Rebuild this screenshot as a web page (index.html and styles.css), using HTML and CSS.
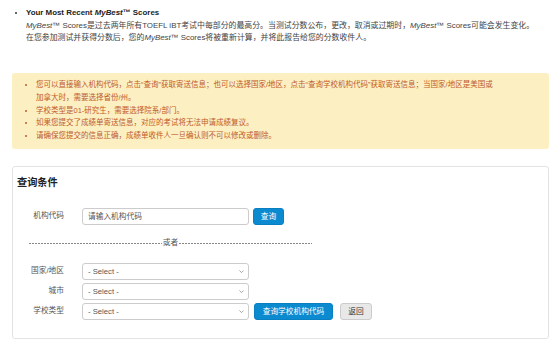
FILE: index.html
```html
<!DOCTYPE html>
<html lang="zh-CN">
<head>
    <meta charset="UTF-8">
    <meta name="viewport" content="width=device-width, initial-scale=1.0">
    <title>成绩单寄送</title>
    <link rel="stylesheet" href="styles.css">
</head>
<body>
<div class="page">
  <ul class="score-note">
    <li>
      <div class="note-title">Your Most Recent <i>MyBest</i>™ Scores</div>
      <div class="note-text"><i>MyBest</i>™ Scores是过去两年所有TOEFL iBT考试中每部分的最高分。当测试分数公布，更改，取消或过期时，<i>MyBest</i>™ Scores可能会发生变化。在您参加测试并获得分数后，您的<i>MyBest</i>™ Scores将被重新计算，并将此报告给您的分数收件人。</div>
    </li>
  </ul>

  <div class="alert">
    <ul>
      <li>您可以直接输入机构代码，点击“查询”获取寄送信息；也可以选择国家/地区，点击“查询学校机构代码”获取寄送信息；当国家/地区是美国或加拿大时，需要选择省份/州。</li>
      <li>学校类型是01-研究生，需要选择院系/部门。</li>
      <li>如果您提交了成绩单寄送信息，对应的考试将无法申请成绩复议。</li>
      <li>请确保您提交的信息正确，成绩单收件人一旦确认则不可以修改或删除。</li>
    </ul>
  </div>

  <div class="panel">
    <h3 class="panel-title">查询条件</h3>

    <div class="field">
      <label class="field-label">机构代码</label>
      <input type="text" class="text-input" placeholder="请输入机构代码">
      <button class="btn btn-primary btn-search">查询</button>
    </div>

    <div class="divider">
      <span class="dash"></span>
      <span class="divider-text">或者</span>
      <span class="dash"></span>
    </div>

    <div class="field">
      <label class="field-label">国家/地区</label>
      <span class="select-wrap">
        <select><option>- Select -</option></select>
        <svg class="chevron" viewBox="0 0 6 4"><path d="M0.5 0.5 L3 3 L5.5 0.5" fill="none" stroke="#777" stroke-width="0.8"/></svg>
      </span>
    </div>
    <div class="field">
      <label class="field-label">城市</label>
      <span class="select-wrap">
        <select><option>- Select -</option></select>
        <svg class="chevron" viewBox="0 0 6 4"><path d="M0.5 0.5 L3 3 L5.5 0.5" fill="none" stroke="#777" stroke-width="0.8"/></svg>
      </span>
    </div>
    <div class="field">
      <label class="field-label">学校类型</label>
      <span class="select-wrap">
        <select><option>- Select -</option></select>
        <svg class="chevron" viewBox="0 0 6 4"><path d="M0.5 0.5 L3 3 L5.5 0.5" fill="none" stroke="#777" stroke-width="0.8"/></svg>
      </span>
      <button class="btn btn-primary btn-school">查询学校机构代码</button>
      <button class="btn btn-default btn-back">返回</button>
    </div>
  </div>
</div>
</body>
</html>
```

FILE: styles.css
```css
* {
  box-sizing: border-box;
}

body {
  margin: 0;
  font-family: "Liberation Sans", "Noto Sans CJK SC", sans-serif;
  font-size: 7.7px;
  color: #333;
  background: #fff;
}

.page {
  width: 537px;
  margin-left: 12px;
  padding-top: 7px;
}

.score-note {
  margin: 0 9px 0 0;
  padding-left: 14px;
  font-size: 7.9px;
  line-height: 12.5px;
}

.note-title {
  font-weight: bold;
  color: #222;
}

.note-text {
  color: #444;
}

.alert {
  margin-top: 28px;
  padding: 6.5px 50px 6.5px 0;
  background: #fcf0c2;
  border-radius: 3px;
  color: #c05a2c;
  font-size: 7.5px;
  line-height: 12.8px;
}

.alert ul {
  margin: 0;
  padding-left: 24px;
}

.panel {
  margin-top: 17px;
  padding: 9px 0 18px;
  border: 1px solid #e3e3e3;
  border-radius: 3px;
}

.panel-title {
  margin: 0 0 18px;
  padding-left: 4px;
  font-size: 10.2px;
  line-height: 14px;
  color: #222;
}

.field {
  display: flex;
  align-items: flex-start;
  height: 17px;
}

.field + .field {
  margin-top: 3px;
}

.field-label {
  width: 51px;
  margin-right: 18px;
  text-align: right;
  line-height: 15px;
  color: #555;
}

.text-input {
  width: 167px;
  height: 17px;
  padding: 0 5px;
  border: 1px solid #ccc;
  border-radius: 3px;
  font: inherit;
  color: #555;
}

.text-input::placeholder {
  color: #555;
}

.select-wrap {
  position: relative;
  width: 167px;
  height: 17px;
}

.select-wrap select {
  appearance: none;
  width: 100%;
  height: 100%;
  padding: 0 5px;
  border: 1px solid #ccc;
  border-radius: 3px;
  background: #fff;
  font: inherit;
  color: #555;
}

.chevron {
  position: absolute;
  right: 5px;
  top: 7px;
  width: 5px;
  height: 3.5px;
}

.divider {
  display: flex;
  align-items: center;
  width: 283px;
  height: 10px;
  margin: 13px 0 15px 16px;
  color: #555;
}

.dash {
  flex: 1;
  height: 1px;
  background: repeating-linear-gradient(90deg, #888 0 2px, transparent 2px 3px);
}

.divider-text {
  padding: 0 1px;
  line-height: 10px;
}

.btn {
  height: 17px;
  border: 1px solid;
  border-radius: 3px;
  font: inherit;
  line-height: 15px;
  cursor: pointer;
}

.btn-primary {
  background: #0b8ad0;
  border-color: #0a80c2;
  color: #fff;
}

.btn-default {
  background: #e8e8e8;
  border-color: #ccc;
  color: #333;
}

.btn-search {
  width: 31px;
  margin-left: 4px;
  padding: 0;
}

.btn-school {
  width: 79px;
  margin-left: 5px;
  padding: 0;
}

.btn-back {
  width: 32px;
  margin-left: 7px;
  padding: 0;
}
```
